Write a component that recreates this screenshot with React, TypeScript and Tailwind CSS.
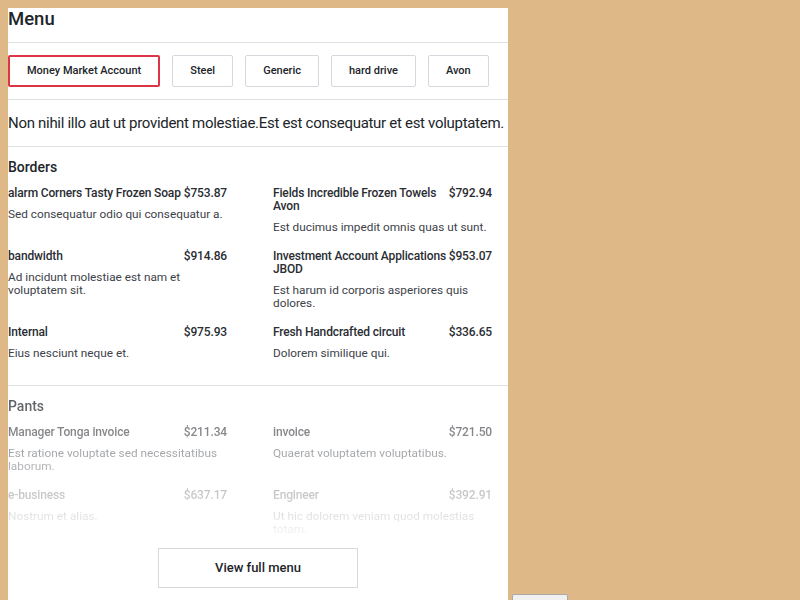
const tabs = ["Money Market Account", "Steel", "Generic", "hard drive", "Avon"];

type Item = { name: string; price: string; desc: string };

const borders: Item[] = [
  { name: "alarm Corners Tasty Frozen Soap", price: "$753.87", desc: "Sed consequatur odio qui consequatur a." },
  { name: "Fields Incredible Frozen Towels Avon", price: "$792.94", desc: "Est ducimus impedit omnis quas ut sunt." },
  { name: "bandwidth", price: "$914.86", desc: "Ad incidunt molestiae est nam et voluptatem sit." },
  { name: "Investment Account Applications JBOD", price: "$953.07", desc: "Est harum id corporis asperiores quis dolores." },
  { name: "Internal", price: "$975.93", desc: "Eius nesciunt neque et." },
  { name: "Fresh Handcrafted circuit", price: "$336.65", desc: "Dolorem similique qui." },
];

const pants: Item[] = [
  { name: "Manager Tonga invoice", price: "$211.34", desc: "Est ratione voluptate sed necessitatibus laborum." },
  { name: "invoice", price: "$721.50", desc: "Quaerat voluptatem voluptatibus." },
  { name: "e-business", price: "$637.17", desc: "Nostrum et alias." },
  { name: "Engineer", price: "$392.91", desc: "Ut hic dolorem veniam quod molestias totam." },
];

const MenuItem = ({ item }: { item: Item }) => (
  <div>
    <div className="flex justify-between items-start text-[12px] leading-[13px] tracking-[-0.15px] font-medium text-[#2a2d33]">
      <span>{item.name}</span>
      <span className="shrink-0">{item.price}</span>
    </div>
    <p className="mt-2 text-[11.8px] leading-[13px] text-[#3d4249]">{item.desc}</p>
  </div>
);

const Section = ({ title, items }: { title: string; items: Item[] }) => (
  <div>
    <h3 className="text-[14px] leading-[20px] font-medium text-[#212529] mb-[10px]">{title}</h3>
    <div className="grid grid-cols-2 w-[484px] gap-x-[46px] gap-y-4">
      {items.map((item) => (
        <MenuItem key={item.name} item={item} />
      ))}
    </div>
  </div>
);

export default function App() {
  return (
    <div className="min-h-screen bg-[#deb887] p-2 flex items-end gap-1 font-['Roboto',sans-serif]">
      <div className="w-[500px] bg-white pb-8 shrink-0">
        <h2 className="text-[18.5px] leading-[22px] font-medium text-[#212529] pb-3 border-b border-[#dee2e6]">
          Menu
        </h2>
        <div className="flex gap-3 py-3 border-b border-[#dee2e6]">
          {tabs.map((t, i) => (
            <button
              key={t}
              className={`h-8 px-[17px] rounded-[2px] text-[11px] font-medium text-[#212529] bg-white ${
                i === 0 ? "border-2 border-[#dc3545]" : "border border-[#d5d8dc]"
              }`}
            >
              {t}
            </button>
          ))}
        </div>
        <p className="py-[14px] text-[15px] leading-[18px] tracking-[-0.3px] text-[#212529] whitespace-nowrap border-b border-[#dee2e6]">
          Non nihil illo aut ut provident molestiae.Est est consequatur et est voluptatem.
        </p>
        <div className="pt-[10px] pb-[25px] border-b border-[#dee2e6]">
          <Section title="Borders" items={borders} />
        </div>
        <div className="pt-[10px] h-[154px] overflow-hidden [mask-image:linear-gradient(to_bottom,rgba(0,0,0,0.8),rgba(0,0,0,0.04))]">
          <Section title="Pants" items={pants} />
        </div>
        <div className="flex justify-center mt-2">
          <button className="w-[200px] h-10 border border-[#d5d8dc] bg-white text-[13px] font-medium text-[#212529]">
            View full menu
          </button>
        </div>
      </div>
      <button className="w-[56px] h-[26px] border border-[#aaaaaa] rounded-[2px] bg-[#f0f0f0] shrink-0"></button>
    </div>
  );
}
